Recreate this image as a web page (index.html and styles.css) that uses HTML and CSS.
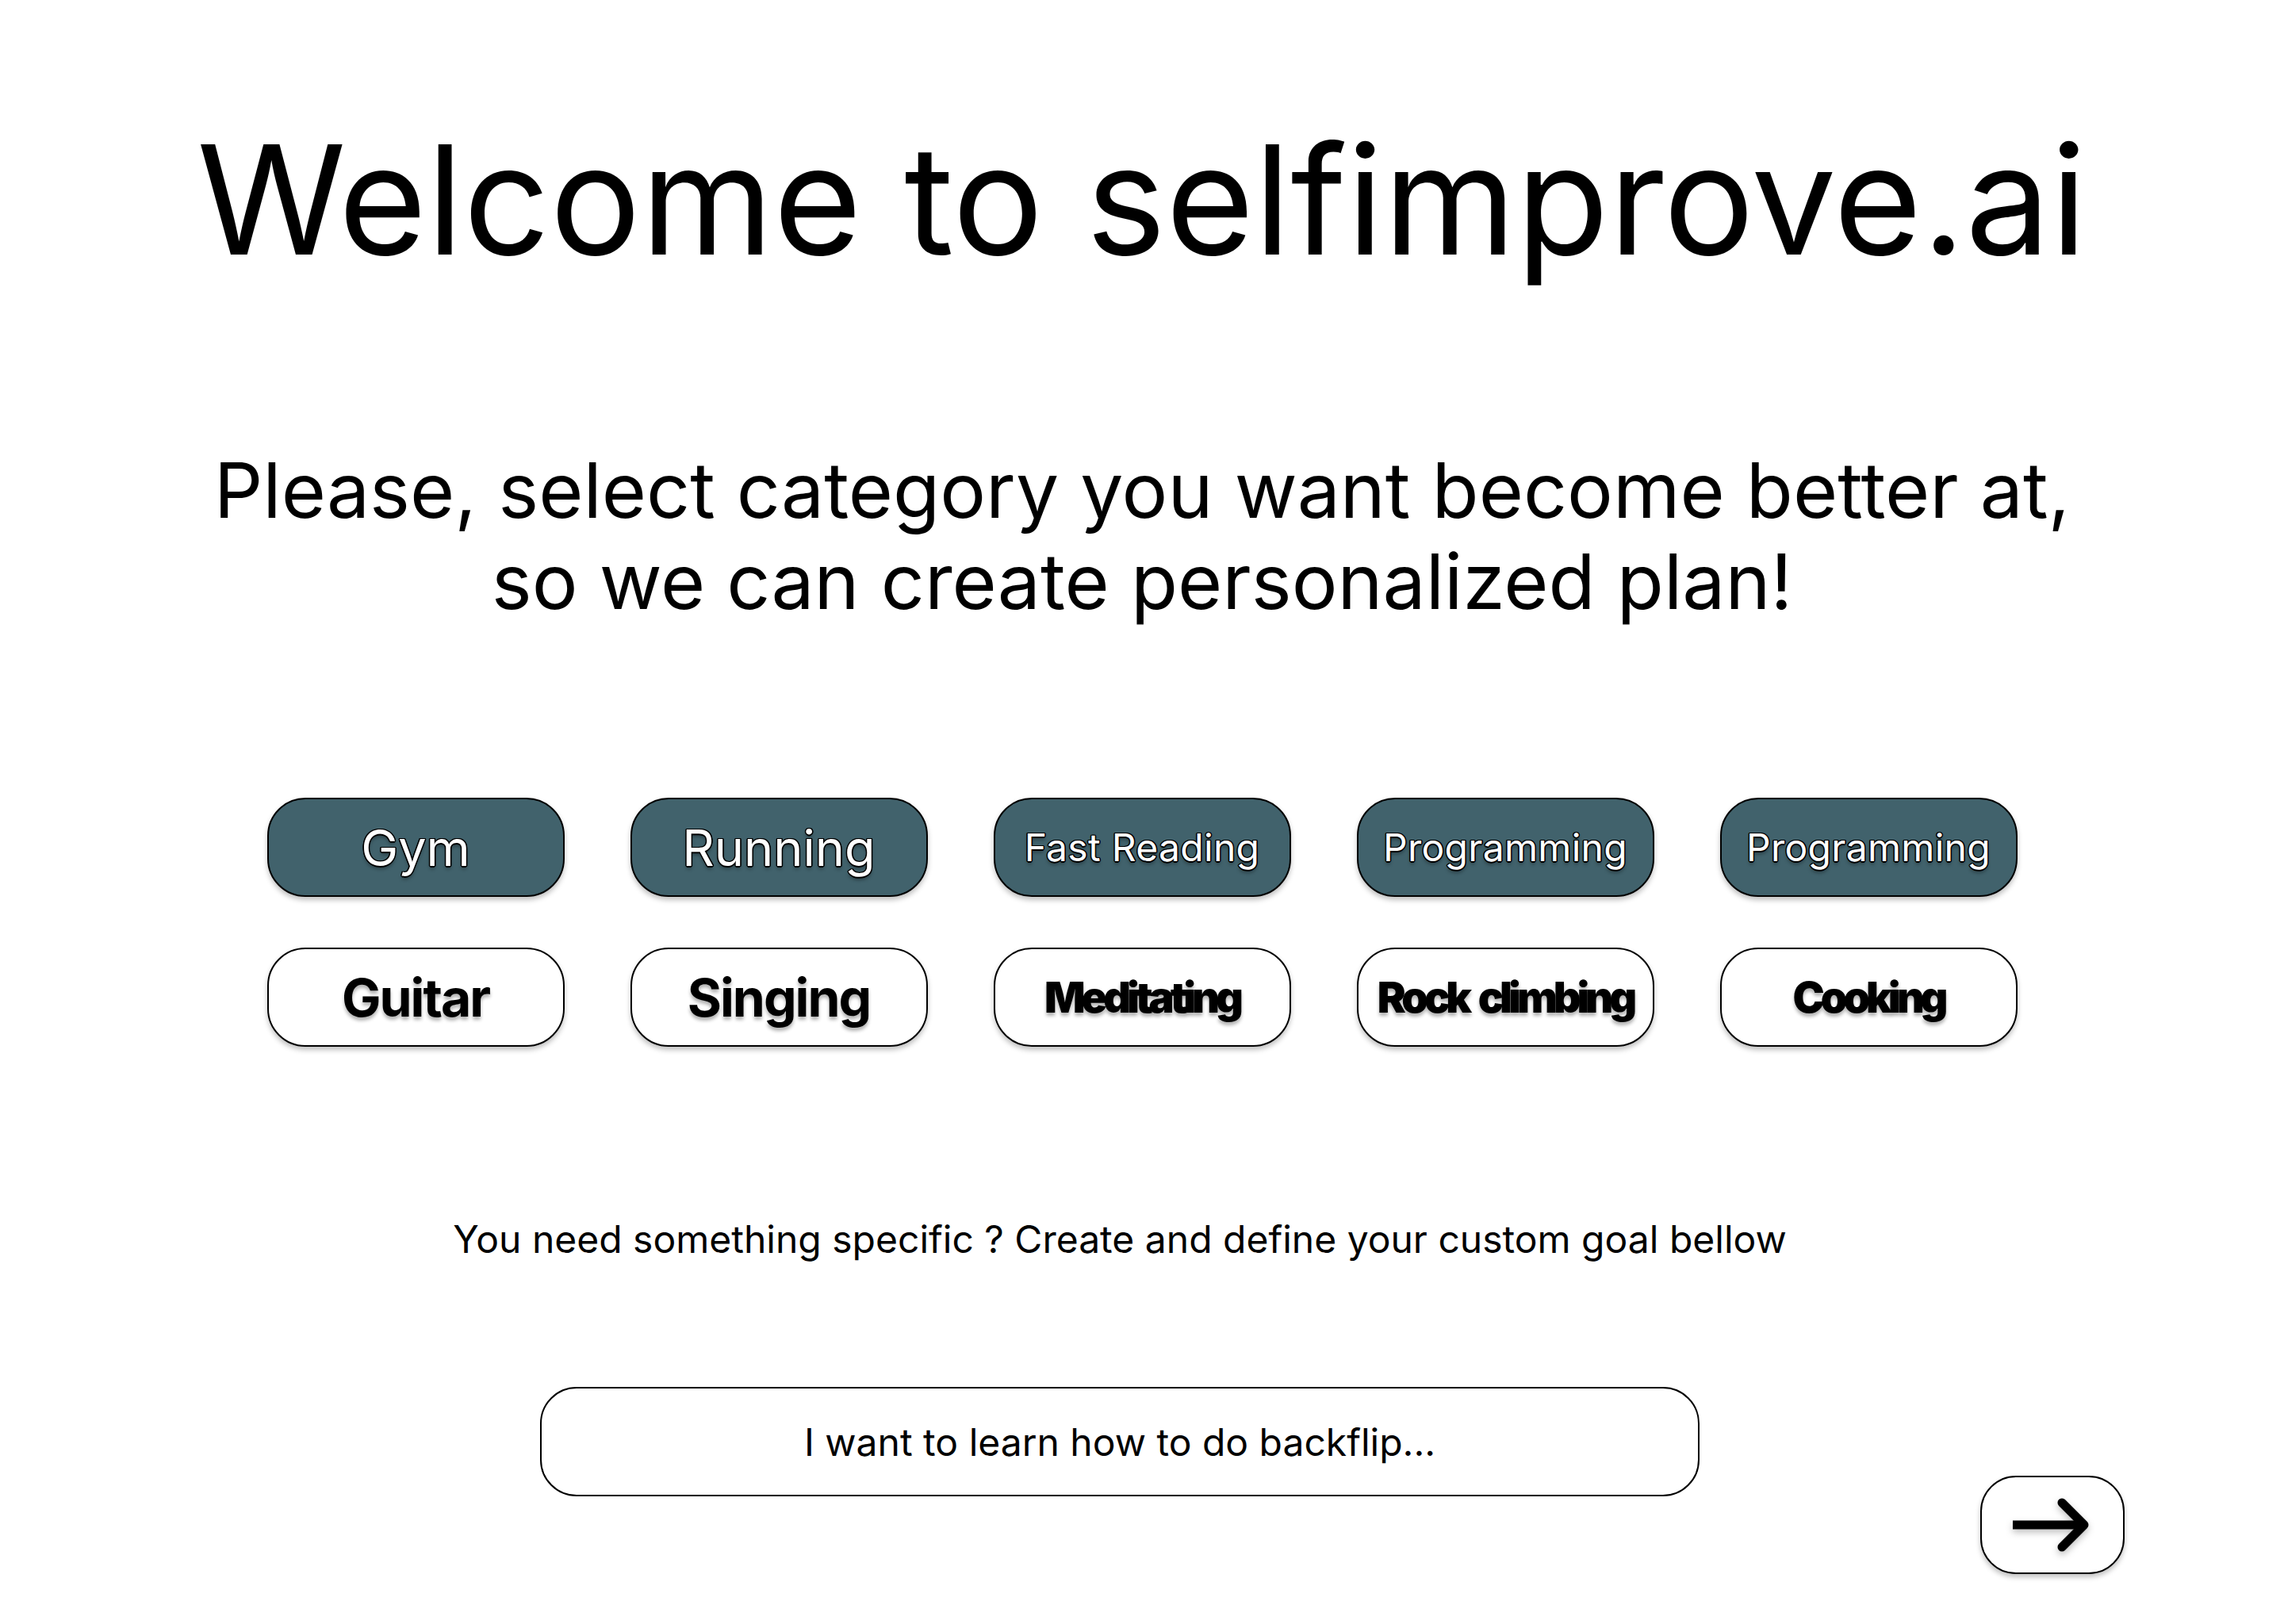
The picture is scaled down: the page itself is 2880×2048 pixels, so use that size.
FILE: index.html
```html
<!DOCTYPE html>
<html lang="en">
<head>
<meta charset="utf-8">
<title>selfimprove.ai</title>
<link rel="stylesheet" href="styles.css">
</head>
<body>
<main class="page">
  <h1 class="title">Welcome to selfimprove.ai</h1>
  <p class="subtitle">Please, select category you want become better at,<br>so we can create personalized plan!</p>

  <div class="categories">
    <button class="chip chip-dark chip-lg">Gym</button>
    <button class="chip chip-dark chip-lg">Running</button>
    <button class="chip chip-dark chip-md">Fast Reading</button>
    <button class="chip chip-dark chip-md">Programming</button>
    <button class="chip chip-dark chip-md">Programming</button>
    <button class="chip chip-light chip-bold">Guitar</button>
    <button class="chip chip-light chip-bold">Singing</button>
    <button class="chip chip-light chip-black">Meditating</button>
    <button class="chip chip-light chip-black">Rock climbing</button>
    <button class="chip chip-light chip-black">Cooking</button>
  </div>

  <section class="goal-row">
    <div class="goal-column">
      <p class="hint">You need something specific ? Create and define your custom goal bellow</p>
      <div class="goal-input">I want to learn how to do backflip...</div>
    </div>
    <button class="next-btn" aria-label="Next">
      <svg class="arrow" width="100" height="80" viewBox="0 0 100 80">
        <path d="M0 40 H90" fill="none" stroke="#000" stroke-width="11"/>
        <path d="M62 12 L90 40 L62 68" fill="none" stroke="#000" stroke-width="11" stroke-linecap="round" stroke-linejoin="round"/>
      </svg>
    </button>
  </section>
</main>
</body>
</html>
```

FILE: styles.css
```css
* {
  box-sizing: border-box;
}

html, body {
  margin: 0;
  padding: 0;
  background: #ffffff;
}

body {
  font-family: Inter, "Noto Sans", "Liberation Sans", sans-serif;
  color: #000;
}

.page {
  width: 2880px;
  height: 2048px;
  display: flex;
  flex-direction: column;
  align-items: center;
  padding-top: 156px;
}

.title {
  margin: 0;
  font-size: 191px;
  font-weight: 400;
  line-height: 1;
  text-align: center;
}

.subtitle {
  margin: 214px 0 0;
  font-size: 96.5px;
  font-weight: 400;
  line-height: 115px;
  text-align: center;
}

.categories {
  margin-top: 215px;
  display: grid;
  grid-template-columns: repeat(5, 375px);
  grid-auto-rows: 125px;
  column-gap: 83px;
  row-gap: 64px;
}

.chip {
  font-family: inherit;
  border: 2px solid #000;
  border-radius: 48px;
  box-shadow: 0 4px 6px rgba(0, 0, 0, 0.25);
  display: flex;
  align-items: center;
  justify-content: center;
  padding: 0;
  cursor: pointer;
  white-space: nowrap;
}

.chip-dark {
  background: #41626c;
  color: #fff;
  font-weight: 400;
  text-shadow:
    -1.5px 0 0 #000,
    1.5px 0 0 #000,
    0 -1.5px 0 #000,
    0 1.5px 0 #000,
    1.1px 1.1px 0 #000,
    -1.1px -1.1px 0 #000,
    1.1px -1.1px 0 #000,
    -1.1px 1.1px 0 #000,
    0 4px 4px rgba(0, 0, 0, 0.35);
}

.chip-lg {
  font-size: 63px;
}

.chip-md {
  font-size: 48px;
  letter-spacing: 0.3px;
}

.chip-light {
  background: #fff;
  color: #000;
  text-shadow: 0 4px 4px rgba(0, 0, 0, 0.3);
}

.chip-bold {
  font-size: 66px;
  font-weight: 700;
  letter-spacing: -2px;
}

.chip-black {
  font-size: 54px;
  font-weight: 900;
  letter-spacing: -5.1px;
  word-spacing: 7px;
}

.goal-row {
  margin-top: 214px;
  width: 100%;
  display: flex;
  align-items: flex-start;
  justify-content: space-between;
  padding: 0 201px 0 681px;
}

.goal-column {
  width: 1462px;
  display: flex;
  flex-direction: column;
  align-items: center;
}

.hint {
  margin: 0;
  font-size: 48px;
  line-height: 58px;
  font-weight: 400;
  text-align: center;
  white-space: nowrap;
}

.goal-input {
  margin-top: 157px;
  width: 1462px;
  height: 138px;
  border: 2px solid #000;
  border-radius: 46px;
  display: flex;
  align-items: center;
  justify-content: center;
  font-size: 48px;
}

.next-btn {
  margin-top: 327px;
  width: 182px;
  height: 124px;
  border: 2px solid #000;
  border-radius: 45px;
  background: #fff;
  box-shadow: 0 4px 6px rgba(0, 0, 0, 0.25);
  display: flex;
  align-items: center;
  justify-content: center;
  padding: 0;
  cursor: pointer;
}

.arrow {
  display: block;
  filter: drop-shadow(0 4px 4px rgba(0, 0, 0, 0.25));
}
```
